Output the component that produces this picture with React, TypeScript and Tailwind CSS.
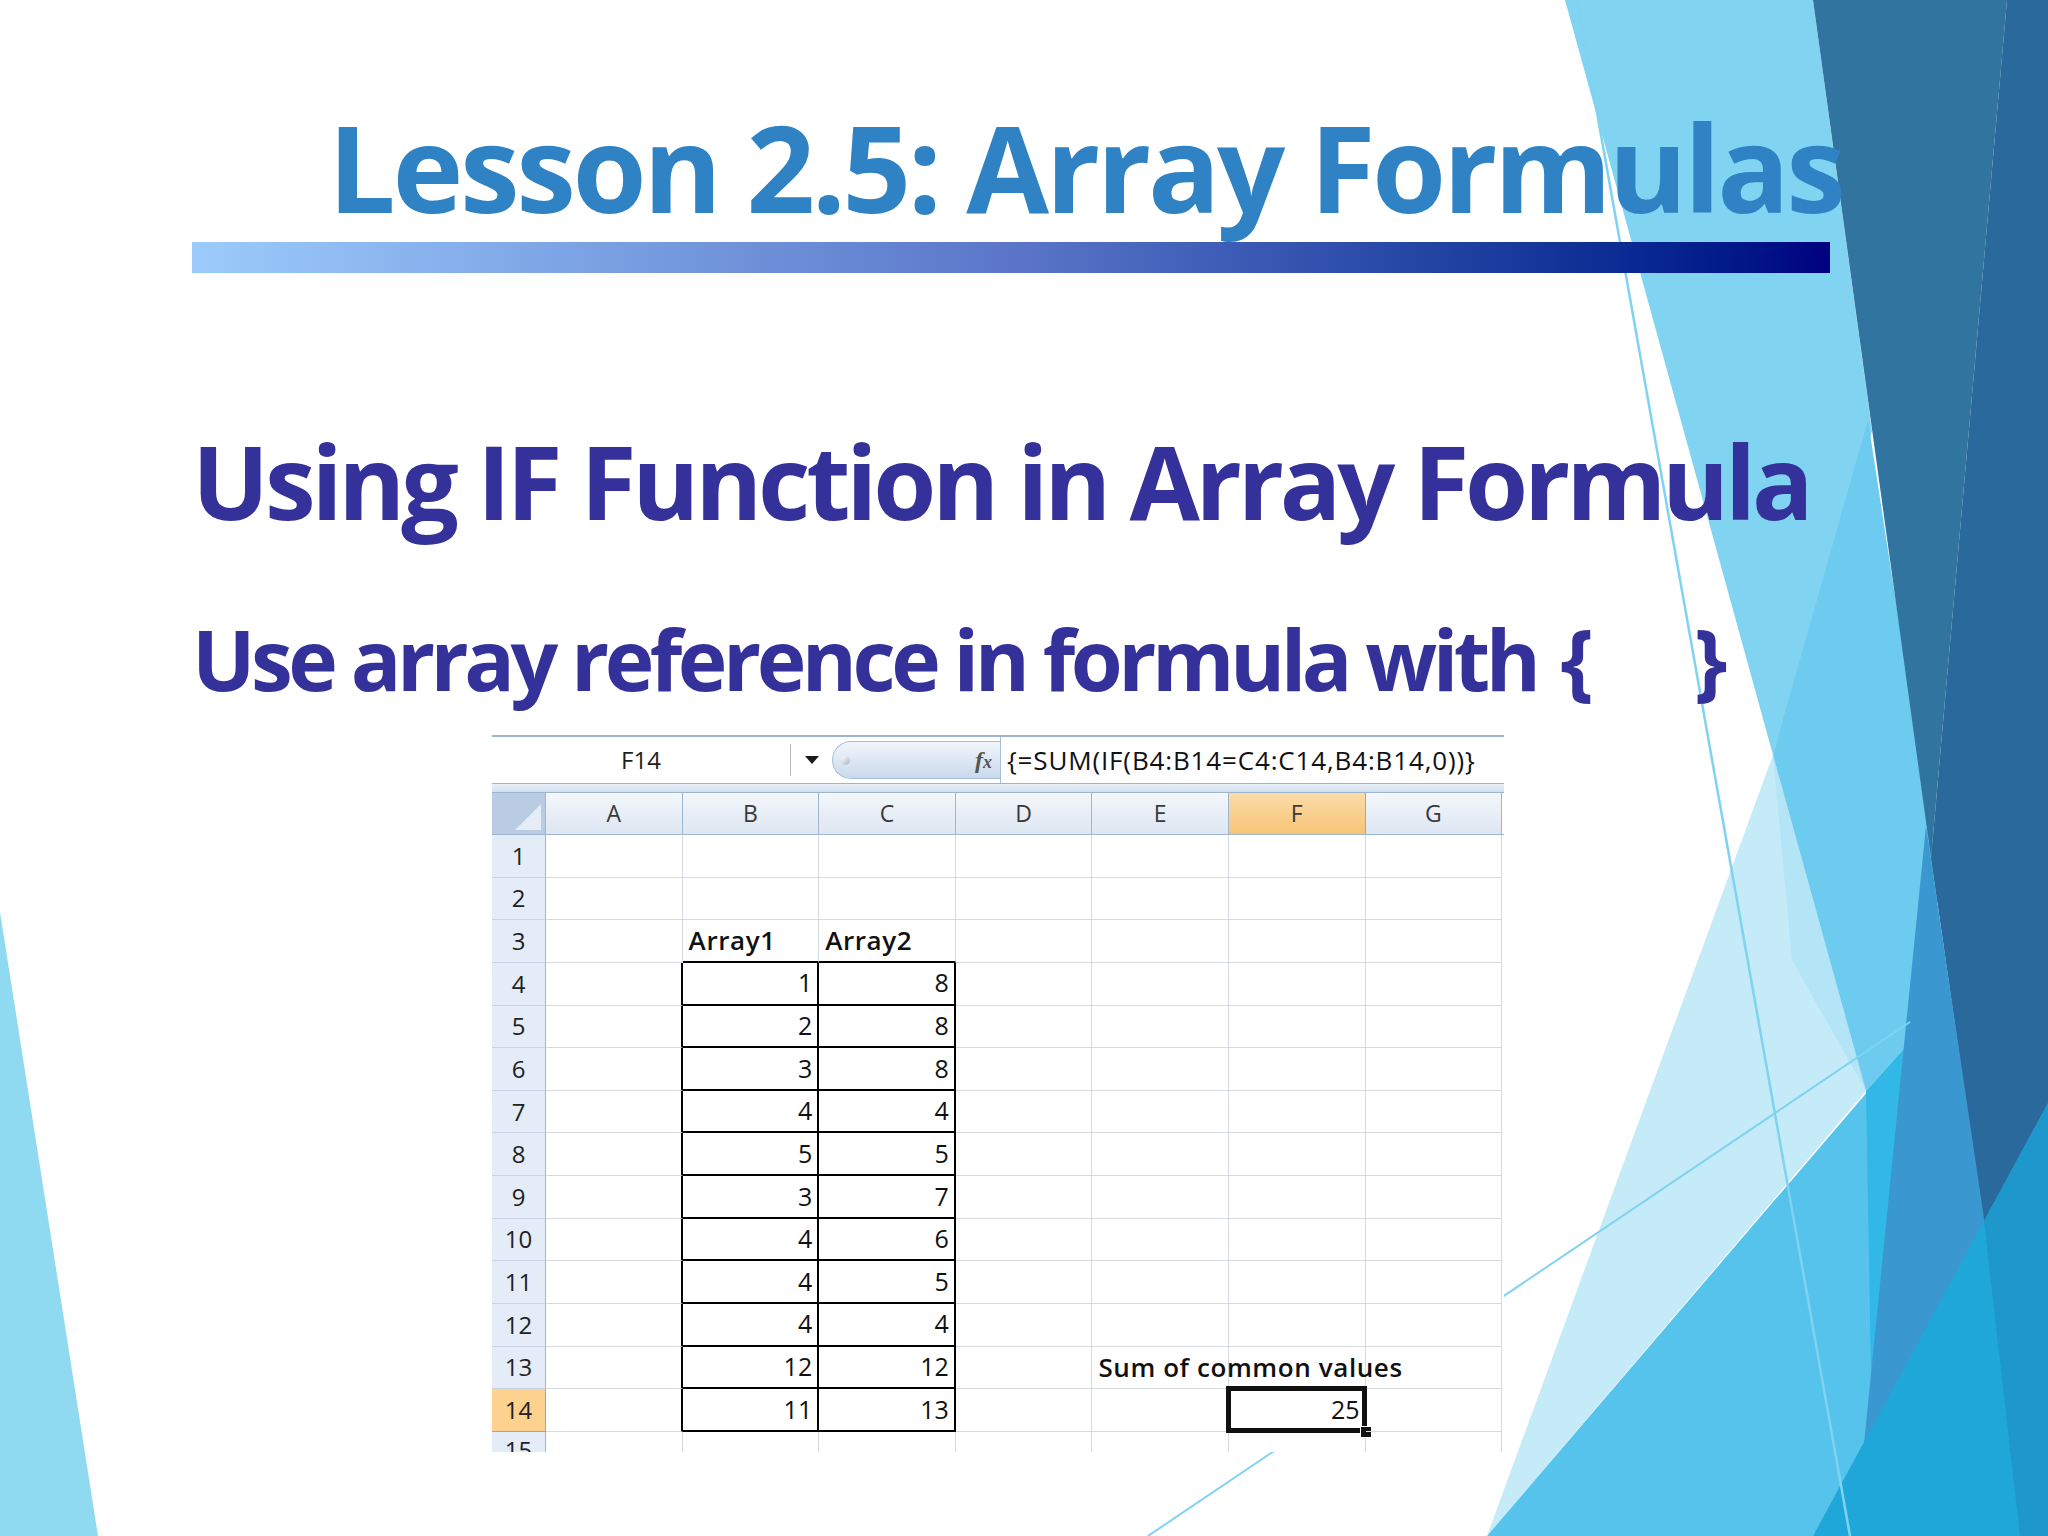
import type { FC } from "react";

const COLS = ["A", "B", "C", "D", "E", "F", "G"];
const ARRAY1 = [1, 2, 3, 4, 5, 3, 4, 4, 4, 12, 11];
const ARRAY2 = [8, 8, 8, 4, 5, 7, 6, 5, 4, 12, 13];

// facet-style backdrop, painted back to front
const Background: FC = () => (
  <svg
    className="absolute inset-0 h-full w-full"
    viewBox="0 0 2048 1536"
    preserveAspectRatio="none"
  >
    <polygon points="0,912 98,1536 0,1536" fill="#8fd9f1" />
    <polygon points="1565,0 1813,0 1872,431 1773,755" fill="#80d3f1" />
    <polygon points="1773,755 1866,1091 1487,1536" fill="#c5ebf8" />
    <polygon points="1773,755 1866,1091 1792,960" fill="#b4e5f7" />
    <polygon points="1868,420 1940,890 1910,1042 1866,1091 1773,755" fill="#6ccbee" />
    <polygon points="1487,1536 1910,1042 1880,1440 1813,1536" fill="#55c3eb" />
    <polygon points="1866,1091 1910,1042 1872,1430" fill="#32b8e6" />
    <polygon points="1813,0 2007,0 1931,858" fill="#31749f" />
    <polygon points="2007,0 2048,0 2048,1110 1985,1235 1931,858" fill="#2a699c" />
    <polygon points="1926,826 1986,1232 1864,1444" fill="#3a97cf" />
    <polygon points="1813,1536 2048,1103 2048,1536" fill="#1fa7da" />
    <polygon points="1984,1221 2048,1103 2048,1536 2020,1536" fill="#1d97cc" />
    <line x1="1577" y1="0" x2="1850" y2="1536" stroke="#7fd3f1" strokeWidth="2.5" />
    <line x1="1148" y1="1536" x2="1910" y2="1022" stroke="#7fd3f1" strokeWidth="2" />
  </svg>
);

const FormulaBar: FC = () => (
  <>
    <div className="flex h-[49px] border-t-2 border-b border-[#9db5d2] bg-white">
      <div className="flex w-[298px] items-center justify-center text-[24px] text-[#1e1e1e]">
        F14
      </div>
      <div className="my-[7px] w-px bg-[#b8b8b8]" />
      <div className="flex w-[41px] items-center justify-center">
        <svg width="14" height="8" viewBox="0 0 14 8">
          <polygon points="0,0 14,0 7,8" fill="#1a1a1a" />
        </svg>
      </div>
      <div className="my-[4px] flex w-[168px] items-center justify-between rounded-l-full border border-r-0 border-[#a9bfd8] bg-gradient-to-b from-[#f2f6fb] to-[#c9d9ec] pl-[8px] pr-[8px]">
        <div className="h-[9px] w-[9px] rounded-full bg-gradient-to-br from-white to-[#a8b6c6]" />
        <span className="font-['Liberation_Serif',serif] text-[24px] font-bold italic text-[#555]">
          f<span className="text-[18px]">x</span>
        </span>
      </div>
      <div className="flex flex-1 items-center border-l border-[#a9bfd8] pl-[6px] text-[26px] tracking-[0.85px] text-[#111]">
        {"{=SUM(IF(B4:B14=C4:C14,B4:B14,0))}"}
      </div>
    </div>
    <div className="h-[9px] border-b border-[#9db5d2] bg-gradient-to-b from-[#e9f0f9] to-[#d3e0ef]" />
  </>
);

const HeaderRow: FC = () => (
  <div className="flex h-[42px] border-b border-[#9eb6ce]">
    <div className="relative w-[54px] border-r border-[#9eb6ce] bg-[#b9cce4]">
      <svg className="absolute bottom-[4px] right-[4px]" width="26" height="26" viewBox="0 0 26 26">
        <polygon points="26,0 26,26 0,26" fill="#e4ecf6" />
      </svg>
    </div>
    {COLS.map((c) => (
      <div
        key={c}
        className={
          c === "F"
            ? "flex w-[136.6px] items-center justify-center border-r border-[#f29436] bg-gradient-to-b from-[#fbdca8] to-[#f7c476] text-[23px] text-[#3a3a3a]"
            : "flex w-[136.6px] items-center justify-center border-r border-[#9eb6ce] bg-gradient-to-b from-[#f4f7fb] to-[#dde6f2] text-[23px] text-[#3a3a3a]"
        }
      >
        {c}
      </div>
    ))}
  </div>
);

const cellText = (r: number, ci: number): { text: string; bold?: boolean; right?: boolean } | null => {
  if (r === 3 && ci === 1) return { text: "Array1", bold: true };
  if (r === 3 && ci === 2) return { text: "Array2", bold: true };
  if (r >= 4 && ci === 1) return { text: String(ARRAY1[r - 4]), right: true };
  if (r >= 4 && ci === 2) return { text: String(ARRAY2[r - 4]), right: true };
  if (r === 13 && ci === 4) return { text: "Sum of common values", bold: true };
  if (r === 14 && ci === 5) return { text: "25", right: true };
  return null;
};

const Cell: FC<{ r: number; ci: number }> = ({ r, ci }) => {
  const inArr = (ci === 1 || ci === 2) && r >= 4;
  const blackRight = inArr || (ci === 0 && r >= 4);
  const blackBottom = inArr || (r === 3 && (ci === 1 || ci === 2));
  const content = cellText(r, ci);
  const selected = r === 14 && ci === 5;

  return (
    <div
      className={[
        "relative flex w-[136.6px] items-center",
        blackRight ? "border-r-2 border-r-black" : "border-r border-r-[#d5d9e1]",
        blackBottom ? "border-b-2 border-b-black" : "border-b border-b-[#d5d9e1]",
        content?.right ? "justify-end pr-[5px]" : "justify-start pl-[6px]",
      ].join(" ")}
    >
      {content && (
        <span
          className={
            content.bold
              ? "relative z-10 whitespace-nowrap text-[26px] font-semibold tracking-[0.6px] text-[#111]"
              : "relative z-10 whitespace-nowrap text-[25px] text-[#111]"
          }
        >
          {content.text}
        </span>
      )}
      {selected && (
        <>
          <div className="absolute -left-[3px] -top-[3px] -right-[2px] -bottom-[2px] border-[5px] border-[#111]" />
          <div className="absolute -bottom-[7px] -right-[7px] h-[12px] w-[12px] border border-white bg-[#111]" />
        </>
      )}
    </div>
  );
};

const Row: FC<{ r: number }> = ({ r }) => (
  <div className="flex h-[42.64px]">
    <div
      className={
        r === 14
          ? "flex w-[54px] items-center justify-center border-r border-b border-[#f29436] bg-[#fcd28e] text-[24px] text-[#222]"
          : "flex w-[54px] items-center justify-center border-r border-b border-r-[#9eb6ce] border-b-[#c6d4e6] bg-[#e4ecf7] text-[24px] text-[#222]"
      }
    >
      {r}
    </div>
    {COLS.map((c, ci) => (
      <Cell key={c} r={r} ci={ci} />
    ))}
  </div>
);

const Spreadsheet: FC = () => (
  <div className="w-[1012px] bg-white">
    <FormulaBar />
    <HeaderRow />
    {Array.from({ length: 14 }, (_, i) => (
      <Row key={i} r={i + 1} />
    ))}
    {/* row 15 is cut off by the screenshot edge */}
    <div className="flex h-[20px] overflow-hidden">
      <div className="flex w-[54px] justify-center border-r border-[#9eb6ce] bg-[#e4ecf7] pt-[6px] text-[24px] leading-none text-[#222]">
        15
      </div>
      {COLS.map((c) => (
        <div key={c} className="w-[136.6px] border-r border-[#d5d9e1]" />
      ))}
    </div>
  </div>
);

export default function App() {
  return (
    <div className="relative h-[1536px] w-[2048px] overflow-hidden bg-white font-['Open_Sans',sans-serif]">
      <Background />
      <div className="relative flex flex-col pl-[192px] pt-[107px]">
        <h1 className="ml-[136px] whitespace-nowrap text-[120px] font-bold leading-none tracking-[-3.4px] text-[#2f82c4]">
          Lesson 2.5: Array Formulas
        </h1>
        <div className="mt-[15px] h-[31px] w-[1638px] bg-gradient-to-r from-[#9ccbfb] via-[#5b76c9] to-[#000080]" />
        <h2 className="mt-[157px] whitespace-nowrap text-[102px] font-bold leading-none tracking-[-4.2px] text-[#35319a]">
          Using IF Function in Array Formula
        </h2>
        <p className="mt-[85px] flex whitespace-nowrap text-[84px] font-bold leading-none tracking-[-4.5px] text-[#35319a]">
          <span>Use array reference in formula with</span>
          <span className="ml-[24px]">{"{"}</span>
          <span className="ml-[105px]">{"}"}</span>
        </p>
        <div className="ml-[300px] mt-[34px]">
          <Spreadsheet />
        </div>
      </div>
    </div>
  );
}
